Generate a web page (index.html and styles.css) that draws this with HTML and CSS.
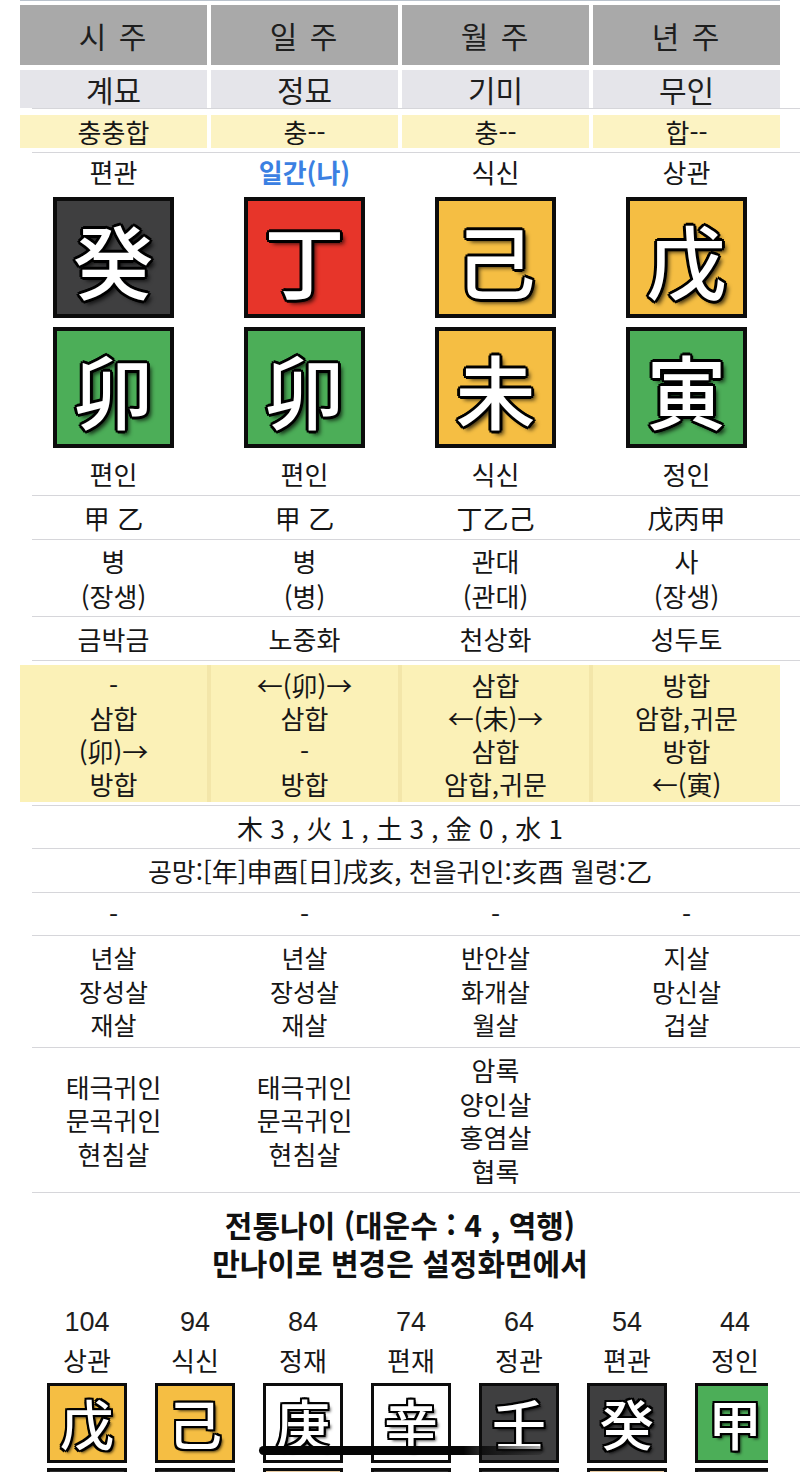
FILE: index.html
```html
<!DOCTYPE html>
<html lang="ko">
<head>
<meta charset="utf-8">
<link rel="stylesheet" href="styles.css">
</head>
<body>
<div class="page">
  <div class="topline"></div>
  <div class="grid4 head">
    <div class="cell">시 주</div><div class="cell">일 주</div><div class="cell">월 주</div><div class="cell">년 주</div>
  </div>
  <div class="grid4 ganji">
    <div class="cell">계묘</div><div class="cell">정묘</div><div class="cell">기미</div><div class="cell">무인</div>
  </div>
  <div class="sep"></div>
  <div class="grid4 rel">
    <div class="cell">충충합</div><div class="cell">충--</div><div class="cell">충--</div><div class="cell">합--</div>
  </div>
  <div class="sep s-rel"></div>
  <div class="grid4 row r-sip">
    <div class="cell">편관</div><div class="cell me">일간(나)</div><div class="cell">식신</div><div class="cell">상관</div>
  </div>
  <div class="grid4 tiles t1">
    <div class="cell"><div class="tile c-water">癸</div></div>
    <div class="cell"><div class="tile c-fire">丁</div></div>
    <div class="cell"><div class="tile c-earth">己</div></div>
    <div class="cell"><div class="tile c-earth">戊</div></div>
  </div>
  <div class="grid4 tiles t2">
    <div class="cell"><div class="tile c-wood">卯</div></div>
    <div class="cell"><div class="tile c-wood">卯</div></div>
    <div class="cell"><div class="tile c-earth">未</div></div>
    <div class="cell"><div class="tile c-wood">寅</div></div>
  </div>
  <div class="grid4 row r-sip2">
    <div class="cell">편인</div><div class="cell">편인</div><div class="cell">식신</div><div class="cell">정인</div>
  </div>
  <div class="sep"></div>
  <div class="grid4 row r43">
    <div class="cell">甲 乙</div><div class="cell">甲 乙</div><div class="cell">丁乙己</div><div class="cell">戊丙甲</div>
  </div>
  <div class="sep"></div>
  <div class="grid4 row r76">
    <div class="cell">병<br>(장생)</div><div class="cell">병<br>(병)</div><div class="cell">관대<br>(관대)</div><div class="cell">사<br>(장생)</div>
  </div>
  <div class="sep"></div>
  <div class="grid4 row r43">
    <div class="cell">금박금</div><div class="cell">노중화</div><div class="cell">천상화</div><div class="cell">성두토</div>
  </div>
  <div class="sep"></div>
  <div class="grid4 yblock">
    <div class="cell">-<br>삼합<br>(卯)→<br>방합</div>
    <div class="cell">←(卯)→<br>삼합<br>-<br>방합</div>
    <div class="cell">삼합<br>←(未)→<br>삼합<br>암합,귀문</div>
    <div class="cell">방합<br>암합,귀문<br>방합<br>←(寅)</div>
  </div>
  <div class="sep s-y"></div>
  <div class="full r42">木 3 , 火 1 , 土 3 , 金 0 , 水 1</div>
  <div class="sep"></div>
  <div class="full r43 small">공망:[年]申酉[日]戌亥, 천을귀인:亥酉 월령:乙</div>
  <div class="sep"></div>
  <div class="grid4 row r42">
    <div class="cell">-</div><div class="cell">-</div><div class="cell">-</div><div class="cell">-</div>
  </div>
  <div class="sep"></div>
  <div class="grid4 row r111">
    <div class="cell">년살<br>장성살<br>재살</div><div class="cell">년살<br>장성살<br>재살</div><div class="cell">반안살<br>화개살<br>월살</div><div class="cell">지살<br>망신살<br>겁살</div>
  </div>
  <div class="sep"></div>
  <div class="grid4 row r144">
    <div class="cell">태극귀인<br>문곡귀인<br>현침살</div><div class="cell">태극귀인<br>문곡귀인<br>현침살</div><div class="cell">암록<br>양인살<br>홍염살<br>협록</div><div class="cell"></div>
  </div>
  <div class="sep"></div>
  <div class="title">전통나이 (대운수 : 4 , 역행)<br>만나이로 변경은 설정화면에서</div>
  <div class="daeun">
    <div class="dcol"><div class="age">104</div><div class="dlabel">상관</div><div class="dtile c-earth">戊</div><div class="dtile2 c-dark"></div></div>
    <div class="dcol"><div class="age">94</div><div class="dlabel">식신</div><div class="dtile c-earth">己</div><div class="dtile2 c-dark"></div></div>
    <div class="dcol"><div class="age">84</div><div class="dlabel">정재</div><div class="dtile c-metal">庚</div><div class="dtile2 c-tan"></div></div>
    <div class="dcol"><div class="age">74</div><div class="dlabel">편재</div><div class="dtile c-metal">辛</div><div class="dtile2 c-dark"></div></div>
    <div class="dcol"><div class="age">64</div><div class="dlabel">정관</div><div class="dtile c-water">壬</div><div class="dtile2 c-dark"></div></div>
    <div class="dcol"><div class="age">54</div><div class="dlabel">편관</div><div class="dtile c-water">癸</div><div class="dtile2 c-tan"></div></div>
    <div class="dcol"><div class="age">44</div><div class="dlabel">정인</div><div class="dtile c-wood">甲</div><div class="dtile2 c-dark"></div></div>
    <div class="scrollbar"></div>
  </div>
</div>
</body>
</html>
```

FILE: styles.css
```css
html, body {
  margin: 0;
  padding: 0;
  background: #ffffff;
}
body {
  font-family: "Noto Sans CJK KR", "Noto Sans", sans-serif;
  color: #161616;
  width: 800px;
  height: 1472px;
  overflow: hidden;
}
.page {
  width: 800px;
}
.topline {
  height: 1px;
  margin-left: 20px;
  width: 760px;
  background: #b9c2cc;
}
.grid4 {
  display: grid;
  grid-template-columns: repeat(4, 187px);
  column-gap: 4px;
  margin-left: 20px;
  width: 760px;
}
.cell {
  display: flex;
  align-items: center;
  justify-content: center;
  text-align: center;
  white-space: nowrap;
}
.head {
  margin-top: 4px;
}
.head .cell {
  height: 60px;
  background: #a9a9a9;
  font-size: 30px;
  letter-spacing: 2px;
  color: #1e1e1e;
}
.ganji {
  margin-top: 5px;
}
.ganji .cell {
  height: 38px;
  background: #e5e5ea;
  font-size: 30px;
  color: #1e1e1e;
}
.sep {
  height: 1px;
  margin-left: 32px;
  width: 768px;
  background: #d6d6da;
}
.rel {
  margin-top: 6px;
}
.rel .cell {
  height: 33px;
  background: #fcf3c3;
  font-size: 26px;
}
.s-rel {
  margin-top: 4px;
}
.row .cell {
  font-size: 26px;
  line-height: 34px;
}
.r-sip .cell {
  height: 36px;
  padding-top: 1px;
}
.me {
  color: #3b80e2;
  font-weight: 700;
}
.tiles {
  margin-top: 7px;
}
.t2 {
  margin-top: 9px;
}
.tile {
  width: 113px;
  height: 113px;
  border: 4px solid #0c0c0c;
  display: flex;
  align-items: center;
  justify-content: center;
  font-family: "Noto Sans CJK SC", "Noto Sans CJK KR", sans-serif;
  font-weight: 500;
  font-size: 80px;
  line-height: 1;
  color: #ffffff;
  text-shadow:
    -2px -2px 0 #000, 2px -2px 0 #000, -2px 2px 0 #000, 2px 2px 0 #000,
    0 -3px 0 #000, 0 3px 0 #000, -3px 0 0 #000, 3px 0 0 #000,
    4px 4px 4px rgba(0,0,0,0.75);
}
.c-water { background: #3f3f40; }
.c-fire { background: #e7352a; }
.c-earth { background: #f5be43; }
.c-wood { background: #4cae58; }
.c-metal { background: #ffffff; }
.c-dark { background: #2e2e2e; }
.c-tan { background: #e6c9a0; }
.r-sip2 .cell {
  height: 47px;
  padding-top: 4px;
  box-sizing: border-box;
}
.r42 .cell, .full.r42 { height: 42px; }
.r43 .cell, .full.r43 { height: 43px; }
.r76 .cell { height: 76px; line-height: 35px; }
.r111 .cell { height: 111px; line-height: 33.5px; font-size: 25px; }
.r144 .cell { height: 144px; line-height: 33.5px; }
.yblock {
  margin-top: 4px;
  background: #f3e6a9;
}
.yblock .cell {
  height: 137px;
  background: #fbf1b7;
  font-size: 26px;
  line-height: 33px;
}
.s-y {
  margin-top: 3px;
}
.full {
  display: flex;
  align-items: center;
  justify-content: center;
  font-size: 26px;
  white-space: nowrap;
}
.small {
  font-size: 26px;
}
.title {
  margin-top: 12px;
  text-align: center;
  font-size: 30px;
  font-weight: 700;
  line-height: 38px;
  color: #111;
  white-space: nowrap;
}
.daeun {
  position: relative;
  margin-top: 22px;
  width: 768px;
  height: 175px;
  overflow: hidden;
  display: flex;
  padding-left: 33px;
  box-sizing: border-box;
}
.dcol {
  flex: 0 0 108px;
  display: flex;
  flex-direction: column;
  align-items: center;
}
.dcol > div {
  flex-shrink: 0;
}
.age {
  height: 38px;
  line-height: 38px;
  font-size: 27px;
  font-family: "Liberation Sans", "Noto Sans", sans-serif;
  color: #1e1e1e;
}
.dlabel {
  height: 38px;
  line-height: 38px;
  font-size: 26px;
}
.dtile {
  margin-top: 4px;
  width: 74px;
  height: 74px;
  border: 3px solid #0c0c0c;
  display: flex;
  align-items: center;
  justify-content: center;
  font-family: "Noto Sans CJK SC", "Noto Sans CJK KR", sans-serif;
  font-weight: 500;
  font-size: 54px;
  line-height: 1;
  color: #ffffff;
  text-shadow:
    -2px -2px 0 #000, 2px -2px 0 #000, -2px 2px 0 #000, 2px 2px 0 #000,
    0 -2px 0 #000, 0 2px 0 #000, -2px 0 0 #000, 2px 0 0 #000,
    3px 3px 3px rgba(0,0,0,0.7);
}
.dtile2 {
  margin-top: 5px;
  width: 74px;
  height: 74px;
  border: 3px solid #0c0c0c;
}
.scrollbar {
  position: absolute;
  left: 259px;
  top: 143px;
  width: 284px;
  height: 9px;
  border-radius: 5px;
  background: linear-gradient(to right, #050505 0%, #050505 72%, rgba(40,40,40,0.35) 100%);
}
```
